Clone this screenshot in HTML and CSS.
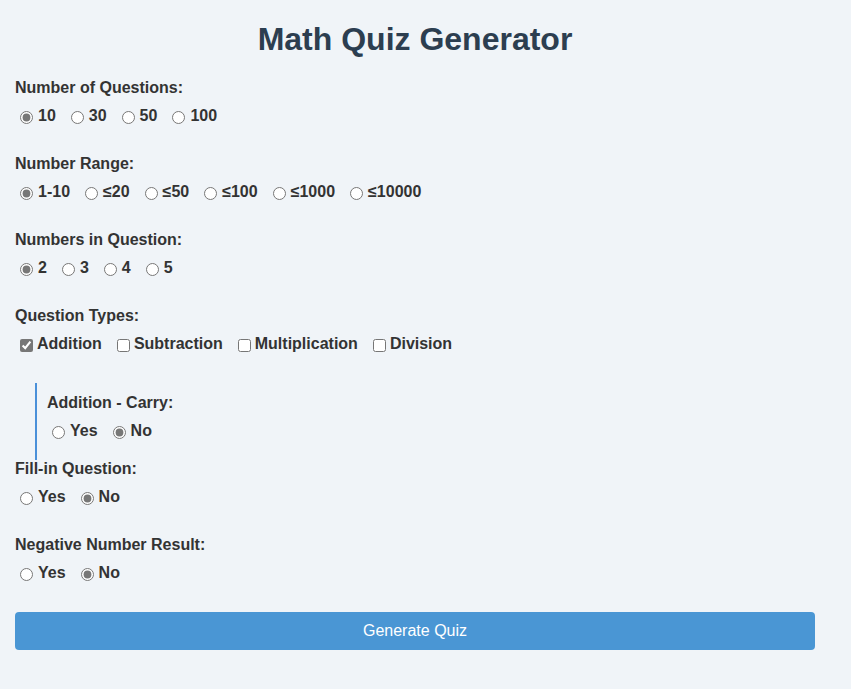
FILE: index.html
```html
<!DOCTYPE html>
<html lang="en">
<head>
<meta charset="utf-8">
<title>Math Quiz Generator</title>
<link rel="stylesheet" href="styles.css">
</head>
<body>
<div class="container">
  <h1 class="title">Math Quiz Generator</h1>

  <div class="group">
    <div class="group-label">Number of Questions:</div>
    <div class="options">
      <label class="opt"><input type="radio" name="count" checked>10</label>
      <label class="opt"><input type="radio" name="count">30</label>
      <label class="opt"><input type="radio" name="count">50</label>
      <label class="opt"><input type="radio" name="count">100</label>
    </div>
  </div>

  <div class="group">
    <div class="group-label">Number Range:</div>
    <div class="options">
      <label class="opt"><input type="radio" name="range" checked>1-10</label>
      <label class="opt"><input type="radio" name="range">≤20</label>
      <label class="opt"><input type="radio" name="range">≤50</label>
      <label class="opt"><input type="radio" name="range">≤100</label>
      <label class="opt"><input type="radio" name="range">≤1000</label>
      <label class="opt"><input type="radio" name="range">≤10000</label>
    </div>
  </div>

  <div class="group">
    <div class="group-label">Numbers in Question:</div>
    <div class="options">
      <label class="opt"><input type="radio" name="nums" checked>2</label>
      <label class="opt"><input type="radio" name="nums">3</label>
      <label class="opt"><input type="radio" name="nums">4</label>
      <label class="opt"><input type="radio" name="nums">5</label>
    </div>
  </div>

  <div class="group">
    <div class="group-label">Question Types:</div>
    <div class="options">
      <label class="opt"><input type="checkbox" checked>Addition</label>
      <label class="opt"><input type="checkbox">Subtraction</label>
      <label class="opt"><input type="checkbox">Multiplication</label>
      <label class="opt"><input type="checkbox">Division</label>
    </div>
  </div>

  <div class="sub-group">
    <div class="group-label">Addition - Carry:</div>
    <div class="options">
      <label class="opt"><input type="radio" name="carry">Yes</label>
      <label class="opt"><input type="radio" name="carry" checked>No</label>
    </div>
  </div>

  <div class="group">
    <div class="group-label">Fill-in Question:</div>
    <div class="options">
      <label class="opt"><input type="radio" name="fill">Yes</label>
      <label class="opt"><input type="radio" name="fill" checked>No</label>
    </div>
  </div>

  <div class="group">
    <div class="group-label">Negative Number Result:</div>
    <div class="options">
      <label class="opt"><input type="radio" name="neg">Yes</label>
      <label class="opt"><input type="radio" name="neg" checked>No</label>
    </div>
  </div>

  <button class="generate" type="button">Generate Quiz</button>
</div>
</body>
</html>
```

FILE: styles.css
```css
html, body {
  margin: 0;
  padding: 0;
  background: #f0f4f8;
}

body {
  font-family: "Liberation Sans", Arial, sans-serif;
  font-size: 16px;
  color: #333333;
}

.container {
  width: 800px;
  padding: 0 15px;
}

.title {
  font-size: 32px;
  font-weight: bold;
  color: #2c3e50;
  text-align: center;
  margin: 21px 0 0;
  line-height: 37px;
}

.group {
  margin-bottom: 29px;
}

.group:first-of-type {
  margin-top: 21px;
}

.group-label {
  font-weight: bold;
  line-height: 18px;
  margin-bottom: 9px;
}

.options {
  display: flex;
  flex-wrap: wrap;
  font-weight: bold;
  line-height: 20px;
}

.opt {
  display: inline-flex;
  align-items: center;
  margin-right: 10px;
}

.opt input {
  accent-color: #777777;
  margin: 3px 5px 1px 5px;
}

.opt input[type="checkbox"] {
  margin-right: 4px;
}

.sub-group {
  margin: 0 0 0 20px;
  border-left: 2px solid #4a90d9;
  padding: 11px 0 19px 10px;
}

.generate {
  display: block;
  width: 800px;
  height: 38px;
  margin-top: 10px;
  border: none;
  border-radius: 4px;
  background: #4a96d4;
  color: #ffffff;
  font-family: "Liberation Sans", Arial, sans-serif;
  font-size: 16px;
}
```
